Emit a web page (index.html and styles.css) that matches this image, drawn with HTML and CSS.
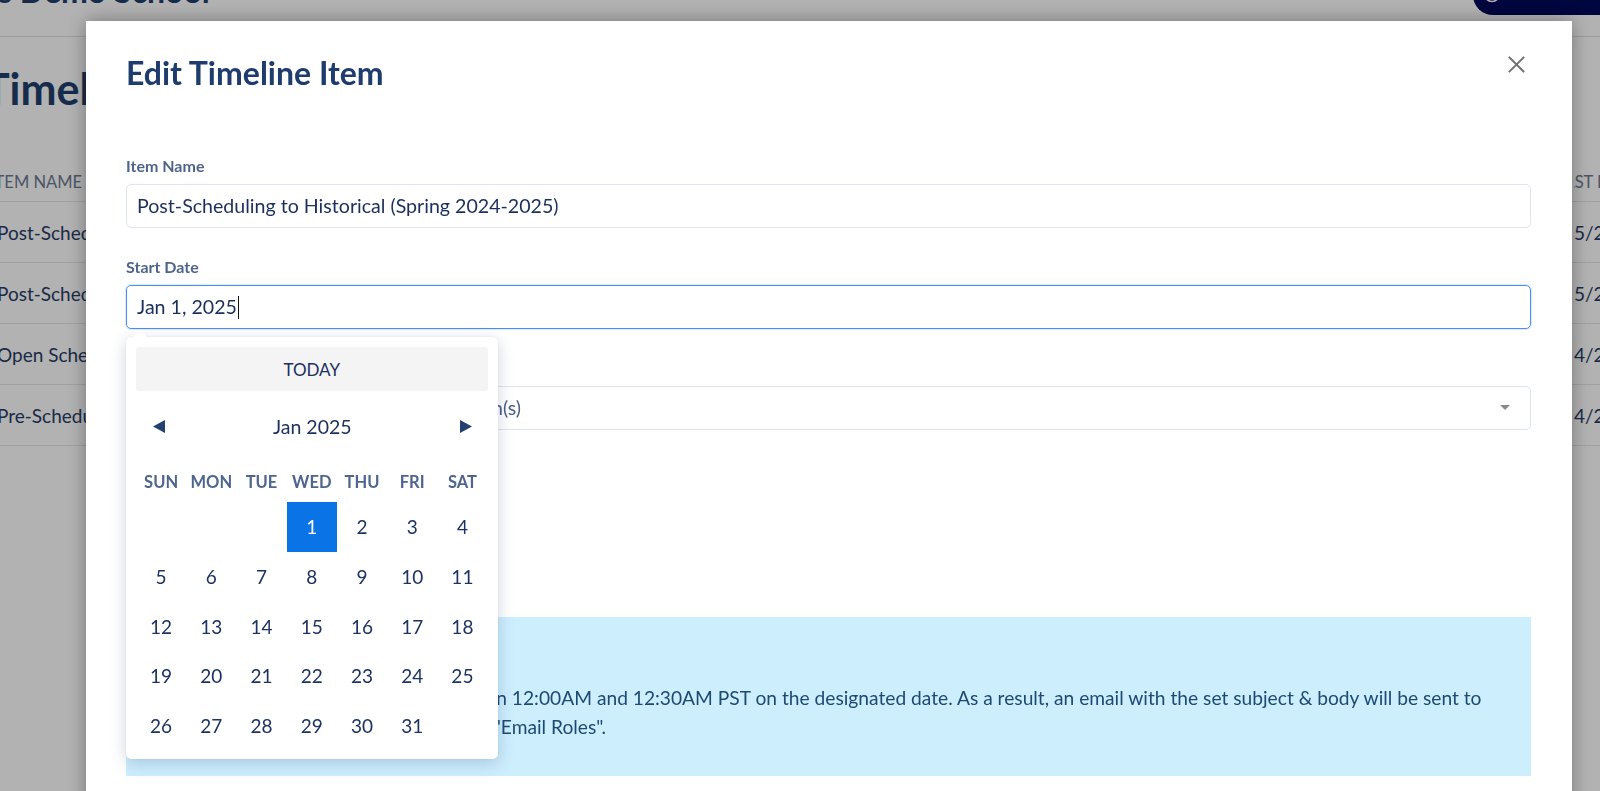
FILE: index.html
```html
<!DOCTYPE html>
<html lang="en">
<head>
<meta charset="utf-8">
<title>Edit Timeline Item</title>
<link rel="stylesheet" href="styles.css">
</head>
<body>
<div class="page">
  <header class="topbar">
    <div class="school">s Demo School</div>
    <div class="account">
      <svg class="account-icon" width="18" height="18" viewBox="0 0 18 18"><circle cx="9" cy="9" r="7.5" fill="none" stroke="#fff" stroke-width="1.6"/></svg>
      <span class="account-name">My Account</span>
    </div>
  </header>
  <main class="content">
    <h1 class="page-title">Timeline</h1>
    <div class="tl-table">
      <div class="tl-row tl-head"><div class="c-name">Item Name</div><div class="c-date"><span class="head-shift">Last Email</span></div></div>
      <div class="tl-row"><div class="c-name">Post-Scheduling to Historical (Spring 2024-2025)</div><div class="c-date">5/21/2025</div></div>
      <div class="tl-row"><div class="c-name">Post-Scheduling to Historical (Fall 2024-2025)</div><div class="c-date">5/21/2025</div></div>
      <div class="tl-row"><div class="c-name">Open Scheduling (2024-2025)</div><div class="c-date">4/21/2025</div></div>
      <div class="tl-row"><div class="c-name">Pre-Scheduling (2024-2025)</div><div class="c-date">4/21/2025</div></div>
    </div>
  </main>
</div>

<div class="overlay"></div>

<div class="modal">
  <button class="close" aria-label="Close">
    <svg width="17" height="17" viewBox="0 0 17 17"><path d="M1.5 1.5 L15.5 15.5 M15.5 1.5 L1.5 15.5" stroke="#707070" stroke-width="1.9" stroke-linecap="square"/></svg>
  </button>
  <h2 class="modal-title">Edit Timeline Item</h2>

  <div class="field">
    <label class="field-label">Item Name</label>
    <div class="input">Post-Scheduling to Historical (Spring 2024-2025)</div>
  </div>

  <div class="field datefield">
    <label class="field-label">Start Date</label>
    <div class="input focused">Jan 1, 2025<span class="caret"></span></div>

    <div class="datepicker">
      <div class="today">TODAY</div>
      <div class="dp-nav">
        <svg class="dp-arrow" width="12" height="13" viewBox="0 0 12 13"><path d="M12 0 L12 13 L0 6.5 Z" fill="#24406f"/></svg>
        <span class="dp-month">Jan 2025</span>
        <svg class="dp-arrow" width="12" height="13" viewBox="0 0 12 13"><path d="M0 0 L0 13 L12 6.5 Z" fill="#24406f"/></svg>
      </div>
      <div class="dp-weekdays">
        <span>SUN</span><span>MON</span><span>TUE</span><span>WED</span><span>THU</span><span>FRI</span><span>SAT</span>
      </div>
      <div class="dp-days">
        <span></span><span></span><span></span><span class="sel">1</span><span>2</span><span>3</span><span>4</span>
        <span>5</span><span>6</span><span>7</span><span>8</span><span>9</span><span>10</span><span>11</span>
        <span>12</span><span>13</span><span>14</span><span>15</span><span>16</span><span>17</span><span>18</span>
        <span>19</span><span>20</span><span>21</span><span>22</span><span>23</span><span>24</span><span>25</span>
        <span>26</span><span>27</span><span>28</span><span>29</span><span>30</span><span>31</span><span></span>
      </div>
    </div>
  </div>

  <div class="field">
    <label class="field-label">Email Roles</label>
    <div class="input select">
      <span class="placeholder">Select roles that will receive all notification(s)</span>
      <svg class="select-caret" width="10" height="5" viewBox="0 0 10 5"><path d="M0 0 L10 0 L5 5 Z" fill="#8a8a8a"/></svg>
    </div>
  </div>

  <div class="actions">
    <button class="btn">Add Email</button>
  </div>

  <div class="info">
    <div class="info-title">Note</div>
    <p class="info-text">This timeline item will be executed between 12:00AM and 12:30AM PST on the designated date. As a result, an email with the set subject &amp; body will be sent to users assigned to the roles selected under "Email Roles".</p>
  </div>
</div>
</body>
</html>
```

FILE: styles.css
```css
* { box-sizing: border-box; }

html, body {
  margin: 0;
  padding: 0;
  height: 100%;
}

body {
  font-family: Lato, "Noto Sans", sans-serif;
  background: #ffffff;
  color: #213f6e;
  overflow: hidden;
}

/* ---------- background page ---------- */
.page {
  height: 791px;
  overflow: hidden;
}

.topbar {
  height: 37px;
  border-bottom: 1px solid #dde3ec;
  display: flex;
  justify-content: space-between;
  align-items: flex-start;
}

.school {
  font-size: 32px;
  font-weight: 700;
  line-height: 38px;
  margin-top: -28px;
  margin-left: -2px;
  color: #213f6e;
  white-space: nowrap;
}

.account {
  width: 127px;
  height: 40px;
  margin-top: -25px;
  background: #000959;
  border-radius: 20px 0 0 20px;
  display: flex;
  align-items: flex-start;
  gap: 8px;
  padding-left: 10px;
  color: #fff;
  font-size: 15px;
  line-height: 18px;
  white-space: nowrap;
}

.account-icon {
  flex: none;
  margin-top: 10px;
}

.page-title {
  font-size: 43px;
  line-height: 52px;
  font-weight: 700;
  margin: 26.4px 0 0 -16px;
  color: #213f6e;
  white-space: nowrap;
}

.tl-table {
  margin-top: 46.9px;
}

.tl-row {
  display: grid;
  grid-template-columns: 1577px 1fr;
  align-items: center;
  height: 61px;
  margin-left: -3px;
  border-bottom: 1px solid #e6e6e6;
  font-size: 19px;
  color: #283c66;
  white-space: nowrap;
}

.tl-head {
  height: 40px;
  font-size: 16.5px;
  color: #6d7a92;
  text-transform: uppercase;
}

.tl-head .c-name { margin-left: -7px; }
.head-shift { margin-left: -19px; }

.c-name, .c-date { overflow: hidden; }

/* ---------- overlay + modal ---------- */
.overlay {
  position: fixed;
  inset: 0;
  background: rgba(0, 0, 0, 0.3);
  z-index: 1;
}

.modal {
  position: fixed;
  left: 86px;
  top: 21px;
  width: 1486px;
  height: 900px;
  background: #ffffff;
  padding: 34px 41px 0 40px;
  box-shadow: 0 0 18px rgba(0, 0, 0, 0.35);
  z-index: 2;
}

.close {
  position: absolute;
  top: 31px;
  right: 44px;
  width: 24px;
  height: 24px;
  padding: 0;
  border: 0;
  background: transparent;
  display: flex;
  align-items: center;
  justify-content: center;
}

.modal-title {
  margin: 0 0 65.5px 0;
  font-size: 32px;
  line-height: 36px;
  font-weight: 700;
  color: #1f3c6f;
}

.field {
  margin-bottom: 30px;
}

.field-label {
  display: block;
  font-size: 16px;
  line-height: 18px;
  font-weight: 700;
  color: #4f648a;
  margin-bottom: 9px;
}

.input {
  height: 44px;
  border: 1px solid #dfe5ee;
  border-radius: 5px;
  padding: 0 10px;
  font-size: 19.6px;
  line-height: 42px;
  color: #1b2f5d;
  white-space: nowrap;
}

.input.focused {
  border-color: #4a8ff2;
  box-shadow: 0 0 0 1px rgba(74, 143, 242, 0.18);
}

.caret {
  display: inline-block;
  width: 1.5px;
  height: 23px;
  background: #111;
  vertical-align: middle;
  margin-left: 1px;
  margin-top: -3px;
}

.select {
  display: flex;
  align-items: center;
  justify-content: space-between;
  padding-right: 20px;
}

.placeholder { color: #4b5f85; }

.datefield { position: relative; }

/* ---------- datepicker ---------- */
.datepicker {
  position: absolute;
  left: 0;
  top: 79.5px;
  width: 371.5px;
  padding: 10px 10px 9px;
  background: #ffffff;
  border-radius: 5px;
  box-shadow: 0 4px 16px rgba(40, 60, 110, 0.22), 0 0 2px rgba(40, 60, 110, 0.08);
  z-index: 5;
}

.datepicker::before {
  content: "";
  position: absolute;
  left: 7px;
  top: -7px;
  border-left: 7px solid transparent;
  border-right: 7px solid transparent;
  border-bottom: 7px solid #ffffff;
}

.today {
  height: 44px;
  background: #f4f4f4;
  border-radius: 3px;
  display: flex;
  align-items: center;
  justify-content: center;
  font-size: 17px;
  color: #1c2f5e;
}

.dp-nav {
  height: 71px;
  display: flex;
  align-items: center;
  justify-content: space-between;
  padding: 0 16px 0 17px;
}

.dp-month {
  font-size: 19.5px;
  color: #1c2f5e;
}

.dp-weekdays {
  height: 40px;
  display: grid;
  grid-template-columns: repeat(7, 1fr);
  align-items: center;
  text-align: center;
  font-size: 16.5px;
  font-weight: 700;
  color: #4e6590;
}

.dp-days {
  display: grid;
  grid-template-columns: repeat(7, 1fr);
  grid-auto-rows: 49.7px;
}

.dp-days span {
  display: flex;
  align-items: center;
  justify-content: center;
  font-size: 19px;
  color: #1c3263;
}

.dp-days span.sel {
  background: #0a73e6;
  color: #ffffff;
}

/* ---------- actions + info ---------- */
.actions {
  margin-top: 63.5px;
}

.btn {
  height: 45px;
  padding: 0 20px;
  border: 1px solid #c9ced6;
  border-radius: 4px;
  background: #f2f3f5;
  font-family: Lato, "Noto Sans", sans-serif;
  font-size: 17px;
  color: #1c2f5e;
}

.info {
  margin-top: 78.7px;
  background: #cdeefd;
  padding: 22px 40px 35px 12px;
  color: #1d4a72;
  font-size: 19.2px;
  line-height: 29px;
}

.info-title {
  font-weight: 700;
  margin-bottom: 15px;
}

.info-text {
  margin: 0;
}
```
